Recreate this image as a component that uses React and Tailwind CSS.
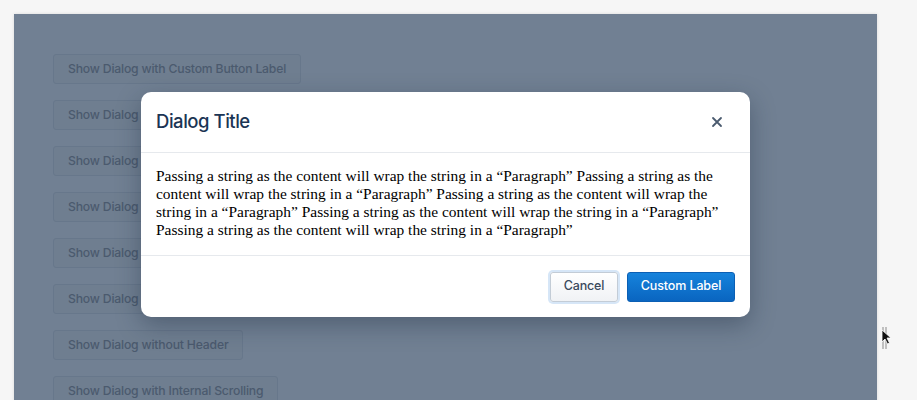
const labels = [
  "Show Dialog with Custom Button Label",
  "Show Dialog with Custom Footer",
  "Show Dialog with Long Title Text",
  "Show Dialog with Custom Width",
  "Show Dialog with Form Content",
  "Show Dialog with Danger Action",
  "Show Dialog without Header",
  "Show Dialog with Internal Scrolling",
];

const para =
  "Passing a string as the content will wrap the string in a \u201cParagraph\u201d Passing a string as the content will wrap the string in a \u201cParagraph\u201d Passing a string as the content will wrap the string in a \u201cParagraph\u201d Passing a string as the content will wrap the string in a \u201cParagraph\u201d Passing a string as the content will wrap the string in a \u201cParagraph\u201d";

export default function App() {
  return (
    <div
      className="relative h-[400px] w-[917px] overflow-hidden bg-[#f6f6f6] pl-[14px] pt-[14px]"
      style={{ fontFamily: "Inter, 'Noto Sans', sans-serif" }}
    >
      <div className="relative h-[420px] w-[863px] bg-[#718093] shadow-[0_0_3px_rgba(0,0,0,0.12)]">
        <div className="flex flex-col items-start gap-4 pl-[39px] pt-[40px]">
          {labels.map((l) => (
            <div
              key={l}
              className="flex h-[30px] items-center rounded-[3px] border border-[#67778b] bg-[#6f7e90] px-[14px] text-[12.2px] font-medium tracking-[-0.015em] text-[#4b5a6e]"
            >
              {l}
            </div>
          ))}
        </div>

        {/* modal */}
        <div className="absolute left-[127px] top-[78px] w-[609px] rounded-[10px] bg-white shadow-[0_8px_24px_rgba(20,35,55,0.35)]">
          <div className="flex h-[61px] items-center justify-between border-b border-[#e6e9ed] px-[15px]">
            <h2 className="text-[18.5px] font-medium tracking-[-0.025em] text-[#1b3554]">Dialog Title</h2>
            <svg width="12" height="12" viewBox="0 0 12 12" className="mr-[12px]">
              <path d="M2 2L10 10M10 2L2 10" stroke="#4a5a6e" strokeWidth="1.8" strokeLinecap="round" />
            </svg>
          </div>
          <div className="border-b border-[#e6e9ed] px-[15px] pb-[16px] pt-[14px]">
            <p
              className="text-[15.45px] leading-[18px] text-black"
              style={{ fontFamily: "'Liberation Serif', serif" }}
            >
              {para}
            </p>
          </div>
          <div className="flex h-[61px] items-center justify-end gap-[9px] px-[15px]">
            <button className="h-[30px] w-[68px] rounded-[3px] border border-[#c3ccd6] bg-gradient-to-b from-white to-[#f0f2f5] text-[12.5px] font-medium tracking-[-0.01em] text-[#3b4a5d] shadow-[0_0_0_2px_#d6e6f7]">
              Cancel
            </button>
            <button className="h-[30px] w-[108px] rounded-[3px] border border-[#0b5fb4] bg-gradient-to-b from-[#1683dc] to-[#0a65c0] text-[12.5px] font-medium tracking-[-0.01em] text-white">
              Custom Label
            </button>
          </div>
        </div>
      </div>

      {/* cursor */}
      <svg className="absolute left-[880px] top-[326px]" width="14" height="26" viewBox="0 0 14 26">
        <path d="M3 1v22M6 1v22" stroke="#8a8a8a" strokeWidth="1" />
        <path d="M2 4L2 16L5 13L7.5 18L9.5 17L7 12L11 12Z" fill="#111" stroke="#fff" strokeWidth="0.8" />
      </svg>
    </div>
  );
}
